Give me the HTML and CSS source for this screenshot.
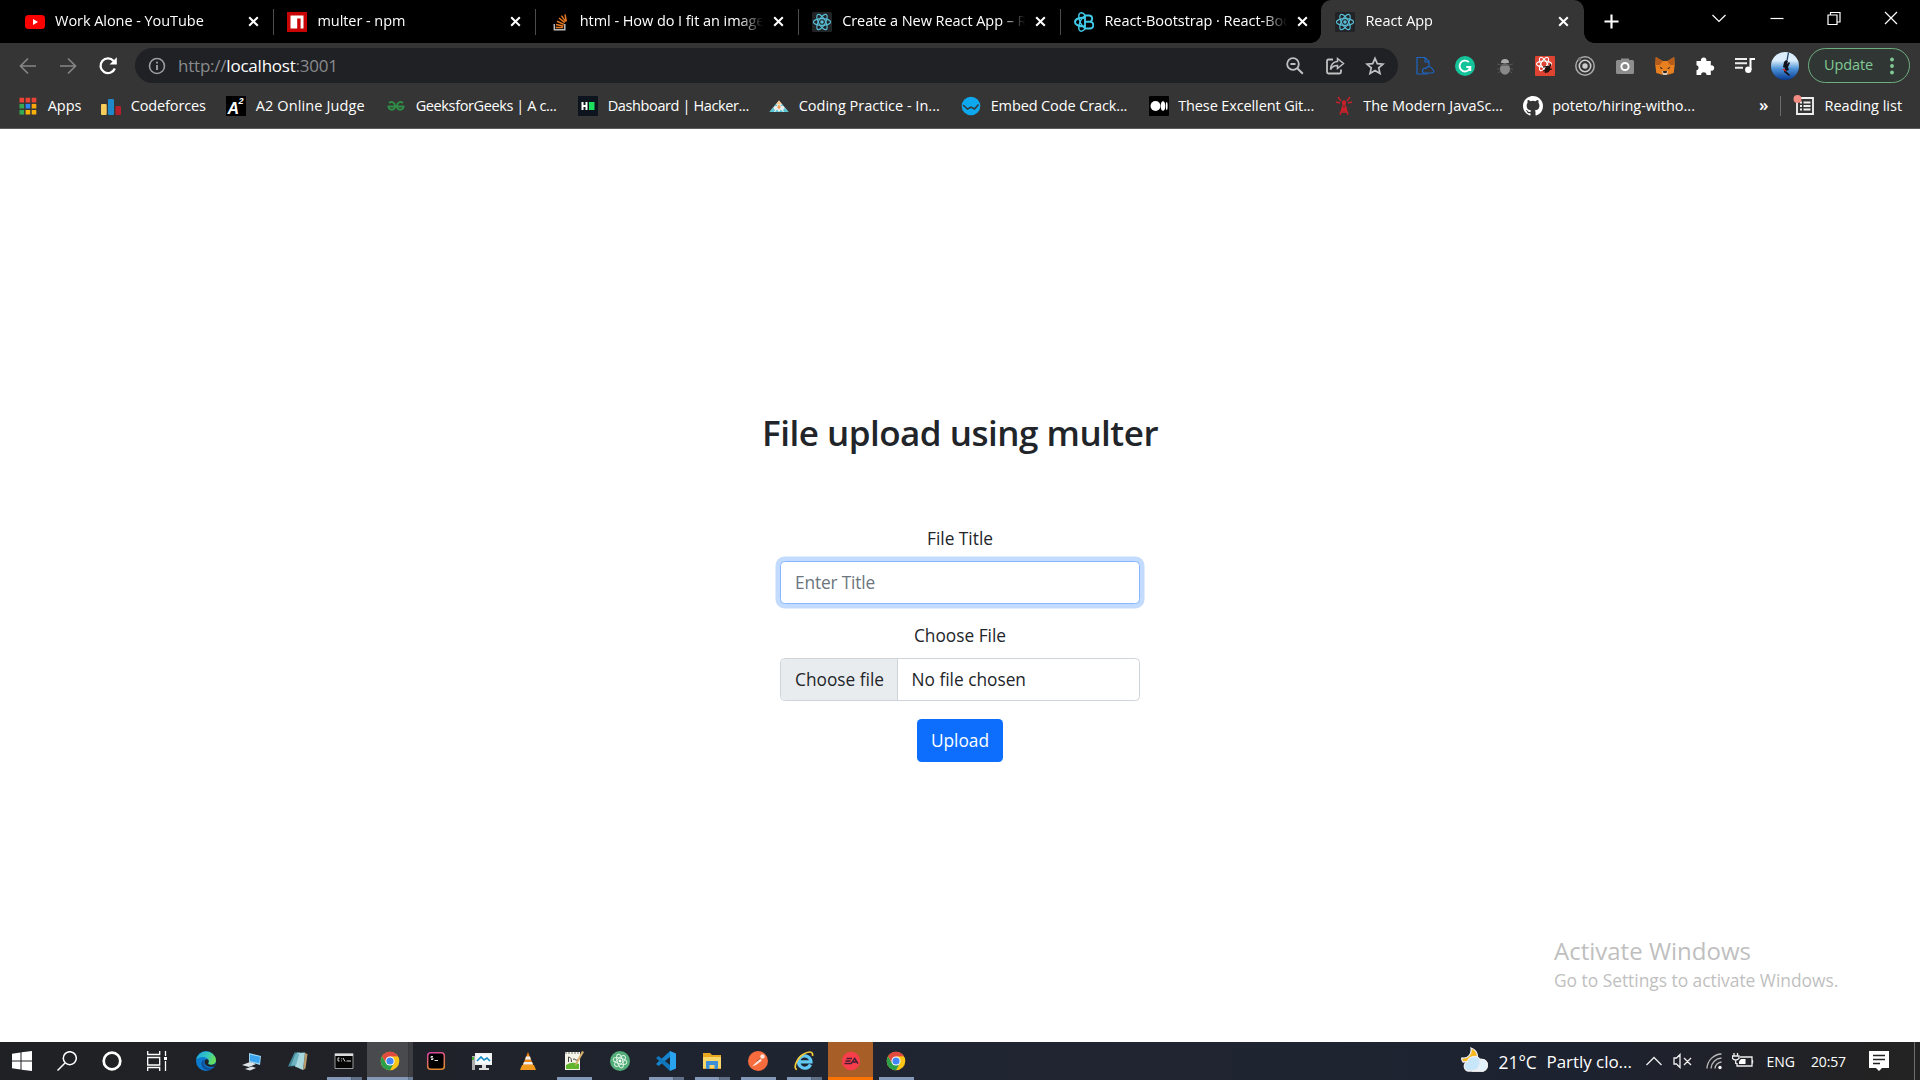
FILE: index.html
```html
<!DOCTYPE html>
<html lang="en">
<head>
<meta charset="utf-8">
<title>React App</title>
<link rel="stylesheet" href="styles.css">
</head>
<body>
<svg class="defs" aria-hidden="true">
  <symbol id="close" viewBox="0 0 12 12"><path d="M1.3 1.3l9.4 9.4M10.7 1.3L1.3 10.7" stroke="#fff" stroke-width="2.2"/></symbol>
  <symbol id="react" viewBox="0 0 20 20"><rect width="20" height="20" rx="1.5" fill="#222326"/><g fill="none" stroke="#58bdd6" stroke-width="1.15"><ellipse cx="10" cy="10" rx="8.6" ry="3.4"/><ellipse cx="10" cy="10" rx="8.6" ry="3.4" transform="rotate(60 10 10)"/><ellipse cx="10" cy="10" rx="8.6" ry="3.4" transform="rotate(120 10 10)"/></g><circle cx="10" cy="10" r="1.8" fill="#58bdd6"/></symbol>
  <symbol id="chrome" viewBox="0 0 20 20"><circle cx="10" cy="10" r="9.3" fill="#fbc516"/><path d="M1.95 5.35A9.3 9.3 0 0 1 18.05 5.35L10 5.5L6 12.3z" fill="#e04a3f"/><path d="M1.95 5.35A9.3 9.3 0 0 0 10 19.3L13.9 12.3L6 12.3z" fill="#2c9f4b"/><circle cx="10" cy="10" r="4.6" fill="#fff"/><circle cx="10" cy="10" r="3.6" fill="#4285f4"/></symbol>
</svg>

<header class="browser">
  <div class="tabs">
    <div class="tab">
      <svg class="favicon" viewBox="0 0 20 20"><rect y="3" width="20" height="14" rx="3.5" fill="#f00"/><path d="M8 7v6l5-3z" fill="#fff"/></svg>
      <span class="tab-title">Work Alone - YouTube</span><svg class="x"><use href="#close"/></svg>
    </div>
    <div class="tab">
      <svg class="favicon" viewBox="0 0 20 20"><path d="M0 0h20v20H0z" fill="#c80404"/><path d="M3.5 3.5h13v13H13.600V6.500h-3.400v10H3.500z" fill="#fff"/></svg>
      <span class="tab-title">multer - npm</span><svg class="x"><use href="#close"/></svg>
    </div>
    <div class="tab">
      <svg class="favicon" viewBox="0 0 20 20" fill="none"><path d="M4.300 12v5.800h10.500V12" stroke="#bcbbbb" stroke-width="1.500"/><path d="M5.700 15.500h7.500M6 12.500l7.400 1.500M7 9.300l6.900 3.100M9 6l5.700 4.700M11.400 3.600l4.300 6M15 2.300l1.300 7" stroke="#e87922" stroke-width="1.500"/></svg>
      <span class="tab-title">html - How do I fit an image in</span><svg class="x"><use href="#close"/></svg>
    </div>
    <div class="tab">
      <svg class="favicon"><use href="#react"/></svg>
      <span class="tab-title">Create a New React App – React</span><svg class="x"><use href="#close"/></svg>
    </div>
    <div class="tab before-active">
      <svg class="favicon" viewBox="0 0 20 20" fill="none" stroke="#41c9e8" stroke-width="1.900"><path d="M11 3.500h4.500a3.200 3.200 0 0 1 0 6.300H11zM11 9.800h5a3.300 3.300 0 0 1 0 6.700h-5zM11 6c-5-1-10 1-10 4s5 5 10 4"/><path d="M11 3C7-1 4 1 5 6c.500 4 3 8 6 10.500M11 17c-4 4-7 2-6-3 .500-4 3-8 6-10.500" stroke-width="1.500"/></svg>
      <span class="tab-title">React-Bootstrap · React-Bootstrap</span><svg class="x"><use href="#close"/></svg>
    </div>
    <div class="tab active">
      <svg class="favicon"><use href="#react"/></svg>
      <span class="tab-title">React App</span><svg class="x"><use href="#close"/></svg>
    </div>
    <svg class="new-tab" viewBox="0 0 16 16"><path d="M8 .5v15M.5 8h15" stroke="#fff" stroke-width="2.300"/></svg>
    <div class="window-buttons">
      <svg viewBox="0 0 16 16"><path d="M1.500 5L8 11.500l6.500-6.500"/></svg>
      <svg viewBox="0 0 16 16"><path d="M1.500 8.500h13"/></svg>
      <svg viewBox="0 0 16 16"><path d="M2 5h9v9.500H2zM4.500 5V2.500h9.500v9.500H11"/></svg>
      <svg viewBox="0 0 16 16"><path d="M2 2l12 12M14 2L2 14"/></svg>
    </div>
  </div>

  <div class="toolbar">
    <div class="nav">
      <svg viewBox="0 0 20 20" stroke="#858585"><path d="M18 10H3M10 2.500L2.500 10l7.500 7.500"/></svg>
      <svg viewBox="0 0 20 20" stroke="#858585"><path d="M2 10h15M10 2.500L17.500 10 10 17.500"/></svg>
      <svg viewBox="0 0 20 20" stroke="#fff"><path d="M16.800 12.500A7.400 7.400 0 1 1 15.600 5" stroke-width="2.300"/><path d="M18.800 1.300v7.200h-7.200z" fill="#fff" stroke="none"/></svg>
    </div>
    <div class="omnibox">
      <svg class="info" viewBox="0 0 18 18" fill="none" stroke="#9a9da1" stroke-width="1.600"><circle cx="9" cy="9" r="7.500"/><path d="M9 8v5M9 4.800v1.800" stroke-width="1.900"/></svg>
      <span class="url">http://<b>localhost</b>:3001</span>
      <svg viewBox="0 0 20 20"><circle cx="8" cy="8" r="5.800"/><path d="M5.500 8h5M12.300 12.300l5.500 5.500" stroke-width="2"/></svg>
      <svg viewBox="0 0 20 20"><path d="M8 3.500H3.500a1.500 1.500 0 0 0-1.500 1.500v11a1.500 1.500 0 0 0 1.500 1.500h11A1.500 1.500 0 0 0 16 16v-2.500"/><path d="M12.500 2.500l6 5-6 5V9.600C9 9.500 7 11 5.500 13.500 5.800 9 8 5.800 12.500 5.500z" stroke-width="1.500"/></svg>
      <svg viewBox="0 0 20 20"><path d="M10 2.300l2.300 5.300 5.700.5-4.300 3.800 1.300 5.700-5-3-5 3 1.300-5.700L2 8.100l5.700-.5z" stroke-width="1.700"/></svg>
    </div>
    <div class="extensions">
      <svg viewBox="0 0 20 20" fill="none" stroke="#1d66c3" stroke-width="1.200"><path d="M13 18H2V1.500h8l4 4V10M10 1.500V6h4"/><path d="M9 17h8.500a1.800 1.800 0 0 0 0-3.500A3.500 3.500 0 0 0 11 12.500 2.400 2.400 0 0 0 9 17z" fill="#353535"/></svg>
      <svg viewBox="0 0 20 20"><circle cx="10" cy="10" r="10" fill="#15c39a"/><path d="M13.800 6.200A5.400 5.400 0 1 0 15.300 11h-4M15.300 11v4" fill="none" stroke="#fff" stroke-width="1.900"/></svg>
      <svg viewBox="0 0 20 20"><path d="M2 8l5 1M2 13h16M3 17l4-3M18 8l-5 1M17 17l-4-3" stroke="#555"/><ellipse cx="10" cy="13" rx="5" ry="5.700" fill="#888"/><path d="M6 7a4 4 0 0 1 8 0z" fill="#aaa"/><path d="M5 9h10" stroke="#444"/></svg>
      <svg viewBox="0 0 20 20"><rect width="20" height="20" rx="1" fill="#df4433"/><g fill="none" stroke="#fff" stroke-width="1.100"><ellipse cx="9" cy="8" rx="7.500" ry="3"/><ellipse cx="9" cy="8" rx="7.500" ry="3" transform="rotate(60 9 8)"/><ellipse cx="9" cy="8" rx="7.500" ry="3" transform="rotate(120 9 8)"/></g><path d="M8 11l8-1M8 15l9-2M10 17l6-9" stroke="#111" stroke-width="1.200"/><ellipse cx="12.500" cy="13" rx="2.600" ry="3.600" fill="#201010" transform="rotate(30 12 13)"/></svg>
      <svg viewBox="0 0 20 20" fill="none" stroke="#aaa"><circle cx="10" cy="10" r="9.200" stroke-width="1.500"/><circle cx="10" cy="10" r="5.700" stroke="#ccc" stroke-width="1.600"/><circle cx="10" cy="10" r="2.700" fill="#ccc" stroke="none"/><circle cx="4.500" cy="3" r="1.800" fill="#777" stroke="none"/></svg>
      <svg viewBox="0 0 20 20"><path d="M2.500 4H6V2.500h8V4h3.500Q19 4 19 5.500v11q0 1.500-1.500 1.500h-15Q1 18 1 16.500v-11Q1 4 2.500 4z" fill="#8d8d8d"/><circle cx="10" cy="10.500" r="3.600" fill="#888" stroke="#fff" stroke-width="2"/></svg>
      <svg viewBox="0 0 20 20"><path d="M.8 1l6.700 4h5l6.700-4 .5 8-1 8-5.200 1.500h-7L1.300 17l-1-8z" fill="#e9801f"/><path d="M.8 1l6.700 4L5 9 .5 9zM19.200 1l-6.700 4L15 9h4.500z" fill="#b75d1c"/><path d="M4.500 10.500l3.500 2-2 .5zM15.500 10.500l-3.500 2 2 .5z" fill="#3a2b22"/><path d="M7 15h6l-1 4H8z" fill="#d6c7b8"/><path d="M8 15h4l-.5 2h-3z" fill="#222"/></svg>
      <svg viewBox="0 0 20 20"><path d="M1.500 5h4.500a2.800 2.800 0 1 1 5.400 0H15.800v4.400a2.700 2.700 0 1 1 0 5.200V19H11.500a2.700 2.700 0 0 0-5.400 0H1.500v-4.700a2.600 2.600 0 0 0 0-5.100z" fill="#fff"/></svg>
      <svg viewBox="0 0 20 20"><path d="M0 3h12M0 7.300h12M0 11.700h8" stroke="#eee" stroke-width="2"/><path d="M15.500 14V3H20" stroke="#fff" stroke-width="2" fill="none"/><circle cx="13.300" cy="13.800" r="3.200" fill="#fff"/></svg>
      <svg class="avatar" viewBox="0 0 28 28"><defs><linearGradient id="sky" x2="0" y2="1"><stop offset=".3" stop-color="#dceefb"/><stop offset=".6" stop-color="#4d93d8"/><stop offset="1" stop-color="#073a91"/></linearGradient></defs><circle cx="14" cy="14" r="14" fill="url(#sky)"/><path d="M17.500.5l-1.500 8" stroke="#27456f" stroke-width="1.300"/><path d="M15 8l2 1-1 3 2-2 1 1-2 4 1 3-3 1 4 4-1 1-5-4 1-4-2-1 1-5z" fill="#10131d"/><path d="M12 17l3 2" stroke="#d22" stroke-width="1.500"/></svg>
    </div>
    <div class="update"><span>Update</span><svg viewBox="0 0 4 18"><circle cx="2" cy="2.500" r="1.900"/><circle cx="2" cy="9" r="1.900"/><circle cx="2" cy="15.500" r="1.900"/></svg></div>
  </div>

  <div class="bookmarks">
    <div class="bookmark"><svg viewBox="0 0 20 20"><g stroke-width="4.600" stroke-dasharray="4.600 1.500"><path d="M1.500 4.100h16.800" stroke="#ea4335"/><path d="M1.500 10.200h4.600" stroke="#34a853"/><path d="M7.600 10.200h4.600" stroke="#2b85f5"/><path d="M13.700 10.200h4.600" stroke="#fba60a"/><path d="M1.500 16.300h4.600" stroke="#34a853"/><path d="M7.600 16.300h10.700" stroke="#fbb00a"/></g></svg><span>Apps</span></div>
    <div class="bookmark"><svg viewBox="0 0 20 20"><rect x="0" y="8" width="5.700" height="11" rx="1" fill="#f7cd5b"/><rect x="7" y="3" width="6" height="16" rx="1" fill="#1e88c9"/><rect x="14.500" y="10" width="5.500" height="9" rx="1" fill="#b4202a"/></svg><span class="snug">Codeforces</span></div>
    <div class="bookmark"><svg viewBox="0 0 20 20"><rect width="20" height="20" fill="#000"/><text x="1.500" y="18" class="a-mark">A</text><text x="12.500" y="8" class="a-power">2</text></svg><span class="loose">A2 Online Judge</span></div>
    <div class="bookmark"><svg viewBox="0 0 20 20" fill="none" stroke="#2f8d46" stroke-width="1.900"><path d="M1.500 10.500h17M3 7c2.500-2 6-.800 6 2.800 0 5.200-6 5-6.500.7M17 7c-2.500-2-6-.800-6 2.800 0 5.200 6 5 6.500.7"/></svg><span class="tight">GeeksforGeeks | A c...</span></div>
    <div class="bookmark"><svg viewBox="0 0 20 20"><rect width="20" height="20" fill="#0e141e"/><path d="M4.500 6v8M8.500 6v8M4.500 10h4" stroke="#fff" stroke-width="2"/><rect x="11" y="6" width="5.500" height="8" fill="#1be05e"/></svg><span class="tight">Dashboard | Hacker...</span></div>
    <div class="bookmark"><svg viewBox="0 0 20 20"><path d="M10 4.500l9.500 11.500H.5z" fill="#e9eef0"/><path d="M10 4.500l3 3.700H7z" fill="#f7c78b"/><path d="M.5 16l3.500-4.500 2 2.500-1 2zM19.500 16l-3.500-4.500-2 2.500 1 2zM6 16l2-2.500 2 2.500 2-2.500 2 2.500zM5.500 10l1.500-2 1.500 2zM14.500 10L13 8l-1.500 2z" fill="#58c6d2"/><path d="M8 11l2-2.500 2 2.500-2 2.500z" fill="#f0a35a"/></svg><span>Coding Practice - In...</span></div>
    <div class="bookmark"><svg viewBox="0 0 20 20"><circle cx="10" cy="10" r="9.300" fill="#0da8ee"/><path d="M2 9l4.500 4L10 11l3.500 2L17.500 8.500" fill="none" stroke="#353535" stroke-width="1.500"/></svg><span class="snug">Embed Code Crack...</span></div>
    <div class="bookmark"><svg viewBox="0 0 20 20"><rect width="20" height="20" fill="#000" rx="1"/><circle cx="6.500" cy="10" r="5" fill="#fff"/><ellipse cx="14" cy="10" rx="2.200" ry="4.700" fill="#fff"/><ellipse cx="17.700" cy="10" rx=".9" ry="4" fill="#fff"/></svg><span class="snug">These Excellent Git...</span></div>
    <div class="bookmark"><svg viewBox="0 0 20 20" fill="none" stroke="#c9202a" stroke-width="1.300"><path d="M10 6L6 19M10 6l4 13M8 12h4l-5 4h6l-5-4M9 9h2"/><path d="M7 5L4 1M13 5l3-4M6 7L2 6M14 7l4-1"/><circle cx="10" cy="6.500" r="1.500" fill="#c9202a"/></svg><span>The Modern JavaSc...</span></div>
    <div class="bookmark"><svg viewBox="0 0 16 16"><path fill="#fff" d="M8 0C3.580 0 0 3.580 0 8c0 3.540 2.290 6.530 5.470 7.590.4.070.55-.17.55-.38 0-.19-.01-.82-.01-1.490-2.010.37-2.530-.49-2.690-.94-.09-.23-.48-.94-.82-1.130-.28-.15-.68-.52-.01-.53.63-.01 1.080.58 1.230.82.72 1.210 1.870.87 2.330.66.070-.52.28-.87.51-1.070-1.780-.2-3.640-.89-3.640-3.950 0-.87.31-1.590.82-2.150-.08-.2-.36-1.020.080-2.120 0 0 .67-.21 2.200.82a7.600 7.600 0 0 1 4 0c1.530-1.040 2.200-.82 2.200-.82.44 1.100.16 1.920.08 2.120.51.56.82 1.270.82 2.150 0 3.070-1.870 3.750-3.650 3.950.29.25.54.73.54 1.480 0 1.070-.01 1.930-.01 2.200 0 .21.15.46.55.38A8 8 0 0 0 16 8c0-4.420-3.580-8-8-8z"/></svg><span>poteto/hiring-witho...</span></div>
    <span class="more">»</span>
    <div class="reading"><svg viewBox="0 0 22 22"><path d="M4 3h16v16H4z" fill="none" stroke="#eee" stroke-width="1.900"/><path d="M7 7.500h2M7 11h2M7 14.500h2M10.500 7.500h7M10.500 11h7M10.500 14.500h7" stroke="#eee" stroke-width="1.900"/><circle cx="4.500" cy="4" r="4" fill="#f28b82"/></svg><span>Reading list</span></div>
  </div>
</header>

<main class="page">
  <h2>File upload using multer</h2>
  <form class="upload-form">
    <label for="title">File Title</label>
    <input id="title" class="control focused" type="text" placeholder="Enter Title">
    <label>Choose File</label>
    <div class="control file"><span class="file-button">Choose file</span><span class="file-name">No file chosen</span></div>
    <button type="button">Upload</button>
  </form>
</main>

<aside class="watermark"><p class="wm-title">Activate Windows</p><p class="wm-sub">Go to Settings to activate Windows.</p></aside>

<footer class="taskbar">
  <div class="system">
    <svg viewBox="0 0 20 20" fill="#fff"><path d="M0 2.700l8.500-1.200v8H0zM9.500 1.300L20 0v9.500H9.500zM0 10.500h8.500v8L0 17.300zM9.500 10.500H20V20L9.500 18.700z"/></svg>
    <svg viewBox="0 0 20 20" fill="none" stroke="#fff" stroke-width="1.500"><circle cx="12.800" cy="7.200" r="6.500"/><path d="M8 12L.5 19.500"/></svg>
    <svg viewBox="0 0 20 20"><circle cx="10" cy="10" r="8.300" fill="none" stroke="#fff" stroke-width="2.700"/></svg>
    <svg viewBox="0 0 20 20" fill="none" stroke="#fff" stroke-width="1.300"><path d="M.7 0v3.500h12V0M.7 20v-3.500h12V20M.7 6.500h12v7.500H.7zM18.500 0v5M18.500 10v10"/><path d="M17 6h3v3h-3z" fill="#fff" stroke="none"/></svg>
  </div>
  <div class="apps">
    <div class="app"><svg viewBox="0 0 20 20"><defs><linearGradient id="edge" x1="0" y1="0" x2="1" y2=".3"><stop stop-color="#1aa5e0"/><stop offset=".6" stop-color="#35c7c0"/><stop offset="1" stop-color="#67df59"/></linearGradient></defs><circle cx="10" cy="10" r="10" fill="#0b7bd0"/><path d="M.2 9A10 10 0 0 1 20 9c.3 4-4 5.500-7 4.500-2-.8 0-1.500-.3-3.500C12 5.500 4 4.500.2 9z" fill="url(#edge)"/><path d="M9 8.200c-3 3-1 8 4 8.800 2 .3 4-.4 5.200-1.300C15 21 7 20 5.500 14c-.6-3 1-5.500 3.500-5.800z" fill="#124f9a"/><path d="M10 8.500c1.500-.5 3 .5 2.700 2-.3 1.500-1.200 2.200.3 3 2 .8 5 .3 6.500-1-.3 1-.8 2-1.600 2.900-4.900 1.300-9.400-.9-9.400-4.400 0-1.200.5-2 1.500-2.500z" fill="#202228"/></svg></div>
    <div class="app"><svg viewBox="0 0 20 20"><path d="M7 2l12 3-1 9L7 11z" fill="#9fd4f3"/><path d="M8 3.500l10 2.300-.8 6.500L8 10z" fill="#3ba4ee"/><path d="M0 14l8-3 6 2-7 3zM3 18l7-2.500 4 1.500-6 2.500z" fill="#dce4e8"/></svg></div>
    <div class="app"><svg viewBox="0 0 20 20"><path d="M17 2l2.500 1-2 14.500L15 19z" fill="#b79a69"/><path d="M6.500 1.500L12 1 8.500 15 0 15.500z" fill="#438999"/><path d="M9 2l8-.5L15 19l-8-3.500z" fill="#a9d8df"/><path d="M7.500 3l4-.500L8 14l-5 .5z" fill="#6fb3c1"/></svg></div>
    <div class="app open stacked"><svg viewBox="0 0 20 20"><path d="M1 2.500h18v15H1z" fill="#050505" stroke="#999"/><path d="M1 3h18v2H1z" fill="#ddd"/><path d="M5.500 7H4v3h1.500M7.500 7.500v.8M7.500 9.500v.8M9 7l2 3.500M12.500 10H17" stroke="#ddd" fill="none" stroke-width="1"/></svg></div>
    <div class="app open current stacked"><svg><use href="#chrome"/></svg></div>
    <div class="app"><svg viewBox="0 0 20 20"><defs><linearGradient id="jb" x2=".3" y2="1"><stop stop-color="#d83fa6"/><stop offset="1" stop-color="#e08b35"/></linearGradient></defs><rect x="1.700" y="1.700" width="16.600" height="16.600" rx="3" fill="#000" stroke="url(#jb)" stroke-width="1.500"/><path d="M7 5.500H5v1.500h2v1.500H5M8.500 9.500H12" stroke="#ddd" fill="none"/></svg></div>
    <div class="app"><svg viewBox="0 0 20 20"><path d="M0 5h3v14H0z" fill="#aaa"/><path d="M3 2h17v12H3z" fill="#eee"/><path d="M4.500 3.500h14v9h-14z" fill="#fafdff"/><path d="M5 10l4-4 3 3 3-2 3 3" fill="none" stroke="#168dc5" stroke-width="1.600"/><path d="M10 14h4v3h3v2H7v-2h3z" fill="#ddd"/><path d="M0 6h2v3H0z" fill="#4caf32"/></svg></div>
    <div class="app"><svg viewBox="0 0 20 20"><path d="M10 1l6 15H4z" fill="#ee8713"/><path d="M8 5.500h4l1 3H7zM6 11h8l1 2.500H5z" fill="#eee"/><path d="M4 14l-2 5h16l-2-5z" fill="#f29a1e"/></svg></div>
    <div class="app open"><svg viewBox="0 0 20 20"><path d="M1 1h15v18H1z" fill="#f3f3e8"/><path d="M2 14Q8 10 15 13v5H2z" fill="#63b52e"/><path d="M2 1v2M5 1v2M8 1v2M11 1v2M14 1v2" stroke="#777"/><path d="M4.500 11V6q3 0 3 5M9 8.500q1-1.500 2 0t3 0" fill="none" stroke="#444"/><path d="M18 0l2 1-7 12-2 2 .500-3z" fill="#d8b06e"/></svg></div>
    <div class="app"><svg viewBox="0 0 20 20"><circle cx="10" cy="10" r="10" fill="#52ad79"/><g fill="none" stroke="#dff3e6" stroke-width="1"><ellipse cx="10" cy="10" rx="7" ry="2.800" transform="rotate(15 10 10)"/><ellipse cx="10" cy="10" rx="7" ry="2.800" transform="rotate(75 10 10)"/><ellipse cx="10" cy="10" rx="7" ry="2.800" transform="rotate(135 10 10)"/></g><circle cx="10" cy="10" r="1.400" fill="#fff"/></svg></div>
    <div class="app open stacked"><svg viewBox="0 0 20 20"><path d="M14 0l6 2.500v15L14 20z" fill="#2aa4ee"/><path d="M14 0v6L2.500 15 0 13z" fill="#1684cf"/><path d="M14 20v-6L2.500 5 0 7z" fill="#1177bd"/></svg></div>
    <div class="app open stacked"><svg viewBox="0 0 20 20"><path d="M1 2h7l2 2h9v14H1z" fill="#e9a820"/><path d="M1 6h18v11H1z" fill="#fbd769"/><path d="M4 10h12v8h-3.500v-4h-5v4H4z" fill="#3d8fd8"/></svg></div>
    <div class="app open"><svg viewBox="0 0 20 20"><circle cx="10" cy="10" r="10" fill="#f76b3c"/><path d="M4 15.500l8-8 2 2-6 4.500z" fill="#ffe5dc"/><circle cx="14.500" cy="5.500" r="2.200" fill="#ffe5dc"/><path d="M8.500 10.500l3.500-3" stroke="#a84a2f"/></svg></div>
    <div class="app open stacked"><svg viewBox="0 0 20 20"><path d="M16.500 13.500A6.200 6.200 0 1 1 17 10.800H6" fill="none" stroke="#61c9f5" stroke-width="3.200"/><path d="M3 18.500C-1 18 2 8 9 3.500 14 .2 19.500-.3 18.500 5" fill="none" stroke="#f3ca38" stroke-width="1.700"/></svg></div>
    <div class="app ea"><svg viewBox="0 0 20 20"><circle cx="10" cy="10" r="9.200" fill="#f93e4b"/><path d="M5.500 7.500H11M4.500 10h5M3.500 12.600h6.700l3.500-5.300 3.200 5.300M12 11h4" fill="none" stroke="#451d34" stroke-width="1.500"/></svg></div>
    <div class="app open"><svg><use href="#chrome"/></svg></div>
  </div>
  <div class="tray">
    <svg class="weather" viewBox="0 0 28 26"><path d="M10 1c6 2 8 8 5 13L2 15q-2-3-1-4c6 1 10-4 9-10z" fill="#f8b71d"/><path d="M7 24a5 5 0 0 1-.5-9.500A7 7 0 0 1 19 12.500 5.800 5.800 0 1 1 22 24z" fill="#c8e6fa"/><path d="M19 12.500A5.800 5.800 0 1 1 22 24H11c6 0 9-5 8-11.500z" fill="#e2f2fc"/></svg>
    <span class="temp">21°C</span><span class="sky">Partly clo...</span>
    <svg class="caret" viewBox="0 0 18 12"><path d="M1.500 10L9 2.500 16.500 10"/></svg>
    <svg class="speaker" viewBox="0 0 20 16"><path d="M1 5h2.500L7 1.500v13L3.500 11H1zM11 5l7 7M18 5l-7 7"/></svg>
    <svg class="wifi" viewBox="0 0 18 18"><path d="M2 16.500A15 15 0 0 1 16.500 2M6 16.500A11 11 0 0 1 16.500 6M10 16.500A7 7 0 0 1 16.500 10" stroke="#bbb"/><circle cx="15" cy="15.500" r="1.700" fill="#fff" stroke="none"/></svg>
    <svg class="battery" viewBox="0 0 22 16"><path d="M8 4h12v9H5V10M20.500 7v3.500M2 0v3M5.500 0v3M.5 3h6.500v2.500q-3.500 3-6.500 0zM3.700 7v4"/><path d="M9 6h4.500v5H7V8.500z" fill="#fff" stroke="none"/></svg>
    <span class="lang">ENG</span><span class="clock">20:57</span>
    <svg class="notice" viewBox="0 0 20 20"><path d="M0 0h20v17h-7l-3 3-3-3H0z" fill="#fff" stroke="none"/><path d="M4 4.500h12M4 8.500h12M4 12.500h7" stroke="#222" stroke-width="1.400"/></svg>
    <i class="peek"></i>
  </div>
</footer>
</body>
</html>
```
FILE: styles.css
```css
* { box-sizing: border-box; }
body {
  margin: 0;
  width: 1920px;
  height: 1080px;
  overflow: hidden;
  display: flex;
  flex-direction: column;
  background: #fff;
  font: 14.5px/20px "Open Sans", "Noto Sans", sans-serif;
}
svg { display: block; flex: none; }
.defs { position: absolute; width: 0; height: 0; }

.browser { height: 129px; background: #353535; border-bottom: 1px solid #5c5c5c; color: #fff; }

/* tab strip */
.tabs { display: flex; height: 43px; padding-left: 11.600px; background: #000; }
.tab { position: relative; display: flex; align-items: center; width: 262.350px; padding-left: 13.500px; }
.tab::after { content: ""; width: 1px; height: 26px; margin-left: auto; background: #4c4c4c; }
.favicon { width: 20px; height: 20px; margin-right: 10px; }
.tab-title {
  width: 185px;
  margin-top: -2px;
  overflow: hidden;
  white-space: nowrap;
  letter-spacing: -.06px;
  mask-image: linear-gradient(90deg, #000 86%, transparent 99%);
}
.x { width: 11px; height: 11px; margin-left: 8px; }
.before-active { width: 260.500px; }
.before-active::after { display: none; }
.active { width: 263px; background: #353535; border-radius: 10px 10px 0 0; padding-left: 14px; }
.active::before, .active::after {
  content: "";
  position: absolute;
  bottom: 0;
  left: -10px;
  width: 10px;
  height: 10px;
  background: radial-gradient(circle at 0 0, transparent 9.500px, #353535 10px);
}
.active::after { left: auto; right: -10px; background: radial-gradient(circle at 100% 0, transparent 9.500px, #353535 10px); }
.new-tab { width: 15px; height: 15px; margin: 14px 0 0 19.500px; }
.window-buttons { display: flex; gap: 41.200px; margin: 10px 21px 0 auto; }
.window-buttons svg { width: 16px; height: 16px; fill: none; stroke: #fff; stroke-width: 1.200; }

/* address row */
.toolbar { display: flex; align-items: center; height: 45px; }
.nav { display: flex; gap: 20px; width: 135px; padding-left: 17.500px; }
.nav svg { width: 20px; height: 20px; fill: none; stroke-width: 1.700; }
.omnibox {
  display: flex;
  align-items: center;
  gap: 20px;
  width: 1263px;
  height: 35px;
  padding: 0 13px;
  border-radius: 18px;
  background: #202124;
  color: #898b8e;
}
.omnibox svg { width: 20px; height: 20px; fill: none; stroke: #c0c1c2; stroke-width: 1.800; }
.omnibox .info { width: 18px; height: 18px; stroke: #9a9da1; stroke-width: 1.600; }
.url { flex: 1; margin-left: -8px; font-size: 17px; letter-spacing: -.22px; }
.url b { font-weight: 400; color: #fff; }
.extensions { display: flex; align-items: center; gap: 20px; width: 402.500px; padding-left: 17px; }
.extensions svg { width: 20px; height: 20px; }
.extensions .avatar { width: 28px; height: 28px; margin-left: -4px; }
.update {
  display: flex;
  align-items: center;
  justify-content: space-between;
  width: 102px;
  height: 35px;
  margin-left: 7.500px;
  padding: 0 15px 0 15px;
  border: 1.500px solid #6fae80;
  border-radius: 18px;
  background: #303634;
  color: #81c995;
}
.update span { margin-top: -1px; letter-spacing: -.1px; }
.update svg { width: 4px; height: 18px; fill: #81c995; }

/* bookmarks */
.bookmarks {
  display: grid;
  grid-template-columns: 83px 125px 160px 192px 191px 192px 187.500px 185px 189px 236.500px 21px 1fr;
  align-items: center;
  height: 36px;
  padding-left: 18px;
}
.bookmark, .reading { display: flex; align-items: center; white-space: nowrap; }
.bookmark svg { width: 20px; height: 20px; margin-right: 9.700px; }
.bookmark span, .reading span { margin-top: -1px; }
.snug { letter-spacing: -.12px; }
.tight { letter-spacing: -.38px; }
.loose { letter-spacing: .12px; }
.a-mark { font: italic bold 16px "Liberation Sans", sans-serif; fill: #fff; }
.a-power { font: italic bold 9px "Liberation Sans", sans-serif; fill: #fff; }
.more { font-size: 17px; margin-top: -3px; font-weight: 600; }
.reading { height: 20px; padding-left: 12px; border-left: 1px solid #6b6b6b; }
.reading svg { width: 22px; height: 22px; margin-right: 9.500px; }

/* page */
.page {
  flex: 1;
  display: flex;
  flex-direction: column;
  align-items: center;
  padding-top: 282px;
  color: #212529;
}
h2 { margin: 0 0 71px; font-size: 35px; line-height: 43px; font-weight: 550; letter-spacing: -.5px; white-space: nowrap; }
.upload-form { display: flex; flex-direction: column; align-items: center; width: 360px; font-size: 17.300px; line-height: 27px; }
.upload-form label { margin-bottom: 9px; }
.control {
  width: 360px;
  height: 43px;
  margin: 0 0 18px;
  padding: 7px 14px 7px;
  border: 1px solid #ced4da;
  border-radius: 4.500px;
  background: #fff;
  color: #212529;
  font: inherit;
}
.control::placeholder { color: #6c757d; opacity: 1; letter-spacing: -.15px; }
.focused { border-color: #86b7fe; box-shadow: 0 0 0 4.500px #c2dbfe; outline: 0; }
.file { display: flex; padding: 0; overflow: hidden; line-height: 41px; }
.file-button { width: 117px; padding-left: 14px; border-right: 1px solid #ced4da; background: #e9ecef; }
.file-name { padding-left: 13.500px; }
.upload-form button {
  width: 86px;
  height: 43px;
  padding: 0 0 1px;
  border: 0;
  border-radius: 4.500px;
  background: #0d6efd;
  color: #fff;
  font: inherit;
}

.watermark { position: absolute; left: 1554px; top: 934px; color: #bfbfbf; white-space: nowrap; }
.watermark p { margin: 0; }
.wm-title { font-size: 24px; line-height: 33px; }
.wm-sub { font-size: 17.400px; line-height: 26px; letter-spacing: -.02px; }

/* taskbar */
.taskbar {
  display: flex;
  height: 38px;
  background: linear-gradient(90deg, #202124 0, #202228 20%, #1e2430 38%, #202531 60%, #1d2230 82%, #222224 96%, #232323 100%);
  color: #fff;
}
.system { display: flex; gap: 25px; width: 183px; padding: 9px 0 0 12px; }
.system svg { width: 20px; height: 20px; }
.apps { display: flex; }
.app { position: relative; display: flex; justify-content: center; width: 46px; height: 38px; padding-top: 9px; }
.app svg { width: 20px; height: 20px; }
.open::after { content: ""; position: absolute; left: 6px; right: 5px; bottom: 0; height: 3px; background: #8399b7; }
.stacked::after { background: linear-gradient(90deg, #8399b7 24px, #4b596b 24px, #5f7087 25px); }
.current { background: linear-gradient(90deg, #484a4e 41px, #303236 41px, #3c3e42 42px); }
.current::after { left: 0; right: 0; background: linear-gradient(90deg, #8399b7 41px, #586880 41px, #6a7c96 42px); }
.ea { width: 45px; background: #a75e27; border-bottom: 3px solid #ff7300; margin: 0 0 0 1px; }
.tray { display: flex; align-items: center; margin-left: auto; height: 38px; }
.tray svg { fill: none; stroke: #eee; stroke-width: 1.300; }
.tray span { margin-top: 1px; white-space: nowrap; }
.tray .weather { width: 28px; height: 26px; margin-right: 10px; margin-top: -2px; }
.temp { width: 48px; font-size: 17.400px; }
.sky { width: 98px; font-size: 17px; letter-spacing: -.05px; }
.caret { width: 18px; height: 12px; margin-right: 10px; margin-top: -1px; }
.speaker { width: 20px; height: 16px; margin-right: 12px; margin-top: -1px; }
.wifi { width: 18px; height: 18px; margin-right: 9px; }
.battery { width: 22px; height: 16px; margin-right: 13px; margin-top: -1px; }
.lang { width: 44.500px; font-size: 14px; }
.clock { width: 58px; font-size: 14px; letter-spacing: -.15px; }
.notice { width: 20px; height: 20px; margin-right: 25px; }
.peek { width: 6px; height: 38px; border-left: 1px solid #6d6d6d; }
```
